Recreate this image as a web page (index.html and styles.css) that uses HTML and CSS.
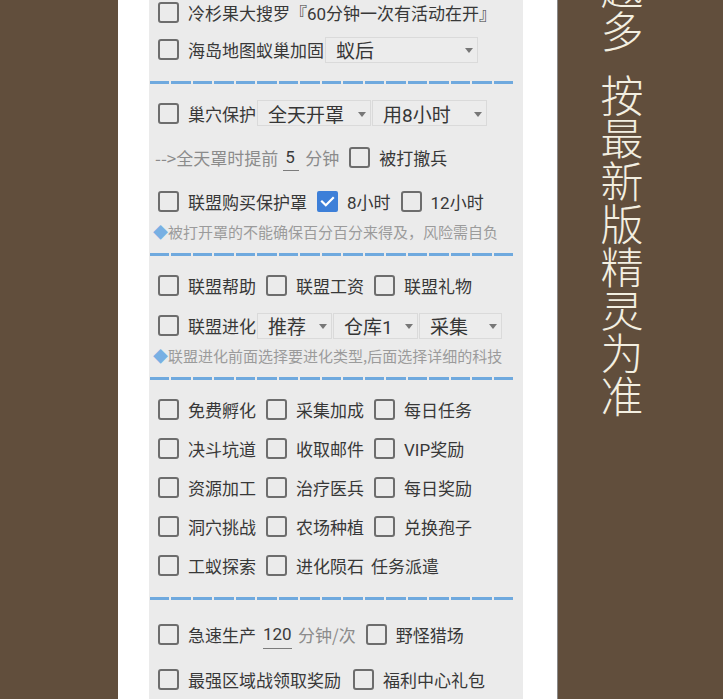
FILE: index.html
```html
<!DOCTYPE html>
<html lang="zh-CN">
<head>
<meta charset="utf-8">
<title>设置</title>
<link rel="stylesheet" href="styles.css">
</head>
<body>
<div class="page">
  <div class="frame">
    <div class="panel">
      <div class="row row-top">
        <span class="cb"></span><span class="label">冷杉果大搜罗『60分钟一次有活动在开』</span>
      </div>
      <div class="row row-loose">
        <span class="cb"></span><span class="label">海岛地图蚁巢加固</span>
        <span class="select sel-153"><span>蚁后</span><i class="caret"></i></span>
      </div>

      <div class="dash"></div>

      <div class="row">
        <span class="cb"></span><span class="label">巢穴保护</span>
        <span class="select sel-114"><span>全天开罩</span><i class="caret"></i></span>
        <span class="select sel-115"><span>用8小时</span><i class="caret"></i></span>
      </div>
      <div class="row row-loose row-note">
        <span class="muted">--&gt;全天罩时提前</span>
        <span class="field field-short">5</span>
        <span class="muted unit">分钟</span>
        <span class="cb"></span><span class="label">被打撤兵</span>
      </div>
      <div class="row row-mid">
        <span class="cb"></span><span class="label">联盟购买保护罩</span>
        <span class="cb checked"><svg viewBox="0 0 21 21" width="21" height="21"><path d="M5 10.5l3.8 3.8L16 7" fill="none" stroke="#fff" stroke-width="2.2" stroke-linecap="square"/></svg></span><span class="label">8小时</span>
        <span class="cb"></span><span class="label">12小时</span>
      </div>
      <div class="hint"><span class="diamond">◆</span>被打开罩的不能确保百分百分来得及，风险需自负</div>

      <div class="dash"></div>

      <div class="row">
        <span class="cb"></span><span class="label">联盟帮助</span>
        <span class="cb"></span><span class="label">联盟工资</span>
        <span class="cb"></span><span class="label">联盟礼物</span>
      </div>
      <div class="row">
        <span class="cb"></span><span class="label">联盟进化</span>
        <span class="select sel-75"><span>推荐</span><i class="caret"></i></span>
        <span class="select sel-85"><span>仓库1</span><i class="caret"></i></span>
        <span class="select sel-83"><span>采集</span><i class="caret"></i></span>
      </div>
      <div class="hint hint-tight"><span class="diamond">◆</span>联盟进化前面选择要进化类型,后面选择详细的科技</div>

      <div class="dash"></div>

      <div class="row row-compact">
        <span class="cb"></span><span class="label">免费孵化</span>
        <span class="cb"></span><span class="label">采集加成</span>
        <span class="cb"></span><span class="label">每日任务</span>
      </div>
      <div class="row row-compact">
        <span class="cb"></span><span class="label">决斗坑道</span>
        <span class="cb"></span><span class="label">收取邮件</span>
        <span class="cb"></span><span class="label">VIP奖励</span>
      </div>
      <div class="row row-compact">
        <span class="cb"></span><span class="label">资源加工</span>
        <span class="cb"></span><span class="label">治疗医兵</span>
        <span class="cb"></span><span class="label">每日奖励</span>
      </div>
      <div class="row row-compact">
        <span class="cb"></span><span class="label">洞穴挑战</span>
        <span class="cb"></span><span class="label">农场种植</span>
        <span class="cb"></span><span class="label">兑换孢子</span>
      </div>
      <div class="row row-compact">
        <span class="cb"></span><span class="label">工蚁探索</span>
        <span class="cb"></span><span class="label">进化陨石</span><span class="label">任务派遣</span>
      </div>

      <div class="dash dash-wide"></div>

      <div class="row">
        <span class="cb"></span><span class="label">急速生产</span>
        <span class="field field-long">120</span>
        <span class="muted unit">分钟/次</span>
        <span class="cb"></span><span class="label">野怪猎场</span>
      </div>
      <div class="row row-loose">
        <span class="cb"></span><span class="label">最强区域战领取奖励</span>
        <span class="cb cb-far"></span><span class="label">福利中心礼包</span>
      </div>
    </div>
  </div>
  <div class="side-note">越多&ensp;按最新版精灵为准</div>
</div>
</body>
</html>
```

FILE: styles.css
```css
html, body {
  margin: 0;
  padding: 0;
}

body {
  background: #614e3c;
  overflow: hidden;
  font-family: Roboto, "Noto Sans CJK SC", sans-serif;
}

.page {
  display: flex;
  height: 699px;
  overflow: hidden;
}

.frame {
  margin-left: 118px;
  width: 408px;
  padding-left: 31px;
  background: #ffffff;
  border-right: 1px solid #8a8a8a;
  flex-shrink: 0;
}

.panel {
  width: 374px;
  height: 100%;
  background: #ebebeb;
  display: flex;
  flex-direction: column;
}

.row {
  display: flex;
  align-items: center;
  height: 40px;
  padding-left: 9px;
  flex-shrink: 0;
  white-space: nowrap;
}

.row-top {
  height: 25px;
}

.row-loose {
  margin-top: 4.5px;
}

.row-mid {
  margin-top: 3.5px;
}

.row-compact {
  height: 39px;
}

.row-note {
  padding-left: 6px;
}

.cb {
  width: 21px;
  height: 21px;
  box-sizing: border-box;
  border: 2px solid #6d6d6d;
  border-radius: 3px;
  margin-right: 9px;
  flex-shrink: 0;
  display: flex;
}

.cb.checked {
  background: #3d7fd8;
  border-color: #3d7fd8;
  border-radius: 2px;
}

.cb.checked svg {
  margin: -2px;
}

.label {
  font-size: 17px;
  color: #383838;
}

.label + .cb,
.select + .cb {
  margin-left: 10px;
}

.label + .cb-far {
  margin-left: 12px;
}

.label + .label {
  margin-left: 7px;
}

.muted {
  font-family: "Noto Sans CJK SC", sans-serif;
  font-size: 17px;
  color: #8b8b8b;
}

.muted + .cb {
  margin-left: 10px;
}

.field {
  display: flex;
  align-items: center;
  box-sizing: border-box;
  font-size: 17px;
  color: #3a3a3a;
  border-bottom: 1.5px solid #7c7c7c;
}

.field-short {
  width: 16px;
  height: 26px;
  margin-left: 5px;
  padding-left: 2px;
}

.field-long {
  width: 29px;
  height: 28px;
  margin-left: 7px;
}

.unit {
  margin-left: 6px;
}

.select {
  display: flex;
  align-items: center;
  justify-content: space-between;
  box-sizing: border-box;
  height: 26px;
  padding: 0 4px 0 10px;
  border: 1px solid #dadada;
  background: #ececec;
  font-size: 19px;
  color: #363636;
  flex-shrink: 0;
}

.label + .select {
  margin-left: 1px;
}

.select + .select {
  margin-left: 1px;
}

.sel-153 { width: 153px; margin-left: 2px; }
.sel-114 { width: 114px; }
.sel-115 { width: 115px; }
.sel-75 { width: 75px; }
.sel-85 { width: 85px; }
.sel-83 { width: 83px; }

.caret {
  width: 0;
  height: 0;
  border-left: 4.5px solid transparent;
  border-right: 4.5px solid transparent;
  border-top: 5px solid #777777;
  margin-top: 2px;
}

.dash {
  height: 3px;
  width: 365px;
  margin: 11px 0 9.5px 1px;
  flex-shrink: 0;
  background: repeating-linear-gradient(to right, #6fa9de 0 19px, transparent 19px 21.5px);
}

.dash-wide {
  margin-top: 12.5px;
  margin-bottom: 14.5px;
}

.hint {
  height: 20px;
  line-height: 20px;
  margin-top: 1px;
  padding-left: 4px;
  font-size: 15px;
  color: #9b9b9b;
  white-space: nowrap;
  flex-shrink: 0;
  font-family: "Noto Sans CJK SC", sans-serif;
}

.hint-tight {
  margin-top: 0.5px;
}

.diamond {
  color: #78b0e3;
}

.side-note {
  writing-mode: vertical-rl;
  font-family: "Noto Sans CJK SC", sans-serif;
  font-weight: 300;
  font-size: 43px;
  line-height: 43px;
  color: #f3efe1;
  margin-left: 42px;
  margin-top: -33px;
  white-space: nowrap;
}
```
